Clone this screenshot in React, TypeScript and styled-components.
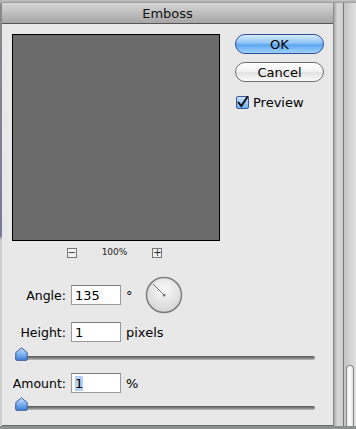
import React from 'react'
import styled, { createGlobalStyle } from 'styled-components'

const GlobalStyle = createGlobalStyle`
  html, body {
    margin: 0;
    padding: 0;
    background: #9a9a9a;
    font-family: "DejaVu Sans", "Liberation Sans", sans-serif;
  }
`

const Screen = styled.div`
  width: 356px;
  height: 429px;
  display: flex;
  flex-direction: column;
  background: #8c8c8c;
  overflow: hidden;
`

const TopStrip = styled.div`
  height: 3px;
  background: linear-gradient(#c8c8c8, #9a9a9a);
  border-left: 2px solid #b0b0b0;
`

const Main = styled.div`
  flex: 1;
  display: flex;
  background: #cfcfcf;
`

const LeftEdge = styled.div`
  width: 2px;
  background: linear-gradient(#8a8a8a, #7a7a9a 55%, #d0d0d0 56%);
`

const Dialog = styled.div`
  width: 332px;
  height: 423px;
  display: flex;
  flex-direction: column;
  background: #e8e8e8;
  border-right: 1px solid #8a8a8a;
  border-bottom: 1px solid #6a6a6a;
  box-sizing: border-box;
`

const TitleBar = styled.div`
  height: 21px;
  display: flex;
  align-items: center;
  justify-content: center;
  background: linear-gradient(#d6d6d6, #a6a6a6);
  border-bottom: 1px solid #555;
  font-size: 13px;
  color: #111;
  box-sizing: border-box;
`

const Body = styled.div`
  padding: 10px 0 0 10px;
  display: flex;
  flex-direction: column;
`

const Top = styled.div`
  display: flex;
  gap: 15px;
`

const PreviewCol = styled.div`
  display: flex;
  flex-direction: column;
  align-items: center;
  width: 208px;
`

const PreviewBox = styled.div`
  width: 208px;
  height: 207px;
  background: #6b6b6b;
  border: 1px solid #000;
  box-sizing: border-box;
`

const ZoomRow = styled.div`
  margin-top: 7px;
  margin-right: 3px;
  display: flex;
  align-items: center;
  gap: 25px;
  height: 10px;
`

const ZoomBox = styled.div`
  width: 10px;
  height: 10px;
  border: 1px solid #777;
  background: #f2f2f2;
  box-sizing: border-box;
  display: flex;
  align-items: center;
  justify-content: center;
  font-size: 10px;
  line-height: 1;
  color: #222;
`

const ZoomText = styled.span`
  font-size: 9px;
  color: #222;
  margin-top: -3px;
`

const ButtonCol = styled.div`
  display: flex;
  flex-direction: column;
  gap: 8px;
  width: 89px;
`

const Pill = styled.div<{ primary?: boolean }>`
  height: 20px;
  border-radius: 10px;
  box-sizing: border-box;
  display: flex;
  align-items: center;
  justify-content: center;
  font-size: 13px;
  color: #000;
  border: 1px solid ${p => (p.primary ? '#2f4f9a' : '#6e6e6e')};
  background: ${p =>
    p.primary
      ? 'linear-gradient(#d6ecff 0%, #8ec2f6 45%, #5ea6ef 55%, #9fd2ff 100%)'
      : 'linear-gradient(#ffffff 0%, #f3f3f3 45%, #e2e2e2 55%, #fbfbfb 100%)'};
`

const CheckRow = styled.div`
  margin-top: 5px;
  display: flex;
  align-items: center;
  gap: 4px;
  font-size: 13px;
  color: #000;
  padding-left: 1px;
`

const Row = styled.div<{ top: number }>`
  margin-top: ${p => p.top}px;
  display: flex;
  align-items: center;
  height: 20px;
`

const Label = styled.div`
  width: 59px;
  text-align: right;
  font-size: 12.5px;
  color: #000;
  padding-right: 5px;
  box-sizing: border-box;
  flex-shrink: 0;
`

const Field = styled.div`
  width: 50px;
  height: 20px;
  box-sizing: border-box;
  background: #fff;
  border: 1px solid #9a9a9a;
  border-top-color: #7a7a7a;
  font-size: 13px;
  padding-left: 3px;
  display: flex;
  align-items: center;
`

const Selected = styled.span`
  background: #b4d0f4;
`

const Unit = styled.span`
  margin-left: 5px;
  font-size: 13px;
  color: #000;
`

const SliderRow = styled.div<{ top: number }>`
  margin-top: ${p => p.top}px;
  margin-left: 3px;
  width: 300px;
  height: 14px;
  position: relative;
`

const Track = styled.div`
  position: absolute;
  left: 0;
  right: 0;
  top: 9px;
  height: 4px;
  border-radius: 2px;
  background: linear-gradient(#555 0%, #777 40%, #bbb 100%);
`

const Thumb = styled.svg`
  position: absolute;
  left: 0;
  top: 0;
`

const Right = styled.div`
  flex: 1;
  display: flex;
`

const Gap = styled.div`
  width: 9px;
  background: linear-gradient(90deg, #a8a8a8, #d8d8d8 40%, #cfcfcf);
  border-right: 1px solid #777;
`

const Scroll = styled.div`
  flex: 1;
  display: flex;
  flex-direction: column;
  background: linear-gradient(90deg, #c4c4c4, #e0e0e0);
`

const ScrollTop = styled.div`
  height: 362px;
`

const ScrollThumb = styled.div`
  flex: 1;
  margin: 0 2px 0 2px;
  border: 1px solid #8a8a8a;
  border-bottom: none;
  border-radius: 6px 6px 0 0;
  background: linear-gradient(90deg, #eaeaea, #ffffff, #dcdcdc);
`

const BottomStrip = styled.div`
  height: 3px;
  background: #8e9090;
`

const SliderThumb = () => (
  <Thumb width="13" height="14" viewBox="0 0 13 14">
    <defs>
      <linearGradient id="tg" x1="0" y1="0" x2="0" y2="1">
        <stop offset="0" stopColor="#c8e0ff" />
        <stop offset="0.5" stopColor="#7fb2f0" />
        <stop offset="1" stopColor="#3f7fd8" />
      </linearGradient>
    </defs>
    <path d="M6.5 0.8 L12.2 5.5 L12.2 12.5 Q12.2 13.3 11.4 13.3 L1.6 13.3 Q0.8 13.3 0.8 12.5 L0.8 5.5 Z" fill="url(#tg)" stroke="#3a5a9a" strokeWidth="1" />
  </Thumb>
)

const Dial = () => (
  <svg width="38" height="38" viewBox="0 0 38 38" style={{ marginLeft: 12 }}>
    <defs>
      <radialGradient id="dg" cx="0.5" cy="0.35" r="0.7">
        <stop offset="0" stopColor="#fafafa" />
        <stop offset="1" stopColor="#d2d2d2" />
      </radialGradient>
    </defs>
    <circle cx="19" cy="19" r="17.5" fill="url(#dg)" stroke="#7e7e7e" strokeWidth="1.5" />
    <line x1="19" y1="19" x2="8" y2="8" stroke="#666" strokeWidth="0.9" />
    <rect x="17.8" y="17.8" width="2.6" height="2.6" fill="#777" />
  </svg>
)

const Checkbox = () => (
  <svg width="13" height="13" viewBox="0 0 13 13">
    <defs>
      <linearGradient id="cg" x1="0" y1="0" x2="0" y2="1">
        <stop offset="0" stopColor="#cfe6ff" />
        <stop offset="1" stopColor="#6aaaf0" />
      </linearGradient>
    </defs>
    <rect x="0.5" y="0.5" width="12" height="12" rx="1.5" fill="url(#cg)" stroke="#3a5a9a" />
    <path d="M2.5 6.5 L5.3 10 L11.5 0.8" fill="none" stroke="#111" strokeWidth="2" strokeLinecap="round" />
  </svg>
)

export default function App() {
  return (
    <Screen>
      <GlobalStyle />
      <TopStrip />
      <Main>
        <LeftEdge />
        <Dialog>
          <TitleBar>Emboss</TitleBar>
          <Body>
            <Top>
              <PreviewCol>
                <PreviewBox />
                <ZoomRow>
                  <ZoomBox>−</ZoomBox>
                  <ZoomText>100%</ZoomText>
                  <ZoomBox>+</ZoomBox>
                </ZoomRow>
              </PreviewCol>
              <ButtonCol>
                <Pill primary>OK</Pill>
                <Pill>Cancel</Pill>
                <CheckRow>
                  <Checkbox />
                  Preview
                </CheckRow>
              </ButtonCol>
            </Top>
            <Row top={27}>
              <Label>Angle:</Label>
              <Field>135</Field>
              <Unit>°</Unit>
              <Dial />
            </Row>
            <Row top={17}>
              <Label>Height:</Label>
              <Field>1</Field>
              <Unit>pixels</Unit>
            </Row>
            <SliderRow top={5}>
              <Track />
              <SliderThumb />
            </SliderRow>
            <Row top={12}>
              <Label>Amount:</Label>
              <Field>
                <Selected>1</Selected>
              </Field>
              <Unit>%</Unit>
            </Row>
            <SliderRow top={4}>
              <Track />
              <SliderThumb />
            </SliderRow>
          </Body>
        </Dialog>
        <Right>
          <Gap />
          <Scroll>
            <ScrollTop />
            <ScrollThumb />
          </Scroll>
        </Right>
      </Main>
      <BottomStrip />
    </Screen>
  )
}
